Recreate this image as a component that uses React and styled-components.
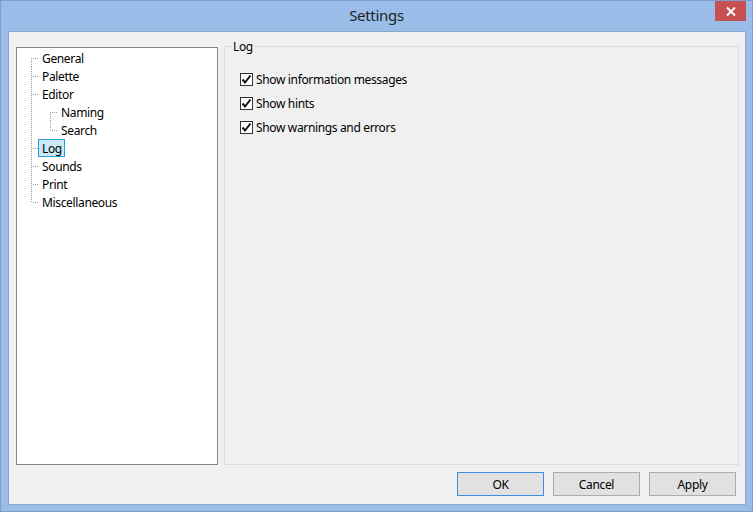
import React from 'react'
import styled, { createGlobalStyle } from 'styled-components'

const GlobalStyle = createGlobalStyle`
    html, body {
        margin: 0;
        padding: 0;
        background: #99bde8;
    }
    body {
        font-family: "Segoe UI", "Noto Sans", sans-serif;
        font-size: 12px;
        letter-spacing: -0.35px;
        color: #000;
    }
`

const Window = styled.div`
    width: 753px;
    height: 512px;
    box-sizing: border-box;
    background: #99bde8;
    border: 1px solid #7f9fc9;
    display: flex;
    flex-direction: column;
`

const TitleBar = styled.div`
    position: relative;
    height: 30px;
    display: flex;
    align-items: center;
    justify-content: center;
`

const Title = styled.div`
    font-size: 15px;
    letter-spacing: -0.3px;
    color: #222;
    margin-top: -2px;
`

const CloseButton = styled.div`
    position: absolute;
    top: 0;
    right: 6px;
    width: 31px;
    height: 20px;
    background: #c75050;
    display: flex;
    align-items: center;
    justify-content: center;
`

const Client = styled.div`
    margin: 0 6px 0 7px;
    width: 738px;
    height: 474px;
    box-sizing: border-box;
    background: #f0f0f0;
    border: 1px solid #8aa7cc;
    padding: 14px 6px 8px 7px;
    display: flex;
    flex-direction: column;
`

const Main = styled.div`
    display: flex;
    gap: 6px;
    height: 419px;
`

const Tree = styled.div`
    margin-top: 1px;
    width: 202px;
    height: 418px;
    box-sizing: border-box;
    background: #fff;
    border: 1px solid #828790;
    padding: 1px 0 0 2px;
`

const Row = styled.div`
    display: flex;
    height: 18px;
    align-items: stretch;
`

const dots = (dir) => `linear-gradient(${dir}, #a0a0a0 50%, transparent 50%)`

const Guide = styled.div`
    position: relative;
    width: 19px;
    flex: none;

    &::before {
        content: '';
        display: ${(p) => (p.$kind === 'none' ? 'none' : 'block')};
        position: absolute;
        left: 12px;
        width: 1px;
        top: ${(p) => (p.$kind === 'first' ? '9px' : '0')};
        bottom: ${(p) => (p.$kind === 'last' ? '9px' : '0')};
        background-image: ${dots('to bottom')};
        background-size: 1px 2px;
    }

    &::after {
        content: '';
        display: ${(p) => (p.$kind === 'pipe' || p.$kind === 'none' ? 'none' : 'block')};
        position: absolute;
        left: 13px;
        width: 6px;
        top: 9px;
        height: 1px;
        background-image: ${dots('to right')};
        background-size: 2px 1px;
        background-position: 1px 0;
    }
`

const Label = styled.div`
    box-sizing: border-box;
    height: 18px;
    padding: 0 2px 0 3px;
    display: flex;
    align-items: center;
    border: 1px solid ${(p) => (p.$selected ? '#26a0da' : 'transparent')};
    background: ${(p) => (p.$selected ? '#cbe8f6' : 'transparent')};
    white-space: nowrap;
`

const GroupBox = styled.div`
    flex: 1;
    box-sizing: border-box;
    border: 1px solid #dcdcdc;
    padding: 0 0 0 15px;
    display: flex;
    flex-direction: column;
`

const Legend = styled.div`
    align-self: flex-start;
    margin: -8px 0 0 -8px;
    padding: 0 1px;
    background: #f0f0f0;
    line-height: 16px;
`

const Options = styled.div`
    display: flex;
    flex-direction: column;
    gap: 8px;
    margin-top: 16px;
`

const Option = styled.label`
    display: flex;
    align-items: center;
    gap: 3px;
    height: 16px;
    white-space: nowrap;
`

const Box = styled.span`
    width: 13px;
    height: 13px;
    box-sizing: border-box;
    border: 1px solid #333;
    background: #fff;
    display: flex;
    align-items: center;
    justify-content: center;
`

const Buttons = styled.div`
    display: flex;
    justify-content: flex-end;
    gap: 9px;
    margin-top: 7px;
    padding-right: 3px;
`

const Button = styled.button`
    width: 87px;
    height: 24px;
    box-sizing: border-box;
    font-family: "Segoe UI", "Noto Sans", sans-serif;
    font-size: 12px;
    letter-spacing: -0.35px;
    color: #000;
    background: #e1e1e1;
    border: 1px solid ${(p) => (p.$default ? '#3c8fe6' : '#adadad')};
    padding: 0;
`

const tree = [
    { label: 'General', guides: ['first'] },
    { label: 'Palette', guides: ['tee'] },
    { label: 'Editor', guides: ['tee'] },
    { label: 'Naming', guides: ['pipe', 'first'] },
    { label: 'Search', guides: ['pipe', 'last'] },
    { label: 'Log', guides: ['tee'], selected: true },
    { label: 'Sounds', guides: ['tee'] },
    { label: 'Print', guides: ['tee'] },
    { label: 'Miscellaneous', guides: ['last'] },
]

const options = ['Show information messages', 'Show hints', 'Show warnings and errors']

const Check = () => (
    <svg width="11" height="11" viewBox="0 0 11 11">
        <path d="M1.5 5.5 L4 8.5 L9.5 1.5" fill="none" stroke="#111" strokeWidth="2" />
    </svg>
)

export default function App() {
    return (
        <>
            <GlobalStyle />
            <Window>
                <TitleBar>
                    <Title>Settings</Title>
                    <CloseButton>
                        <svg width="10" height="9" viewBox="0 0 10 9">
                            <path d="M1 0.5 L9 8.5 M9 0.5 L1 8.5" stroke="#fff" strokeWidth="2" />
                        </svg>
                    </CloseButton>
                </TitleBar>
                <Client>
                    <Main>
                        <Tree>
                            {tree.map((item) => (
                                <Row key={item.label}>
                                    {item.guides.map((g, i) => (
                                        <Guide key={i} $kind={g} />
                                    ))}
                                    <Label $selected={item.selected}>{item.label}</Label>
                                </Row>
                            ))}
                        </Tree>
                        <GroupBox>
                            <Legend>Log</Legend>
                            <Options>
                                {options.map((o) => (
                                    <Option key={o}>
                                        <Box><Check /></Box>
                                        {o}
                                    </Option>
                                ))}
                            </Options>
                        </GroupBox>
                    </Main>
                    <Buttons>
                        <Button $default>OK</Button>
                        <Button>Cancel</Button>
                        <Button>Apply</Button>
                    </Buttons>
                </Client>
            </Window>
        </>
    )
}
